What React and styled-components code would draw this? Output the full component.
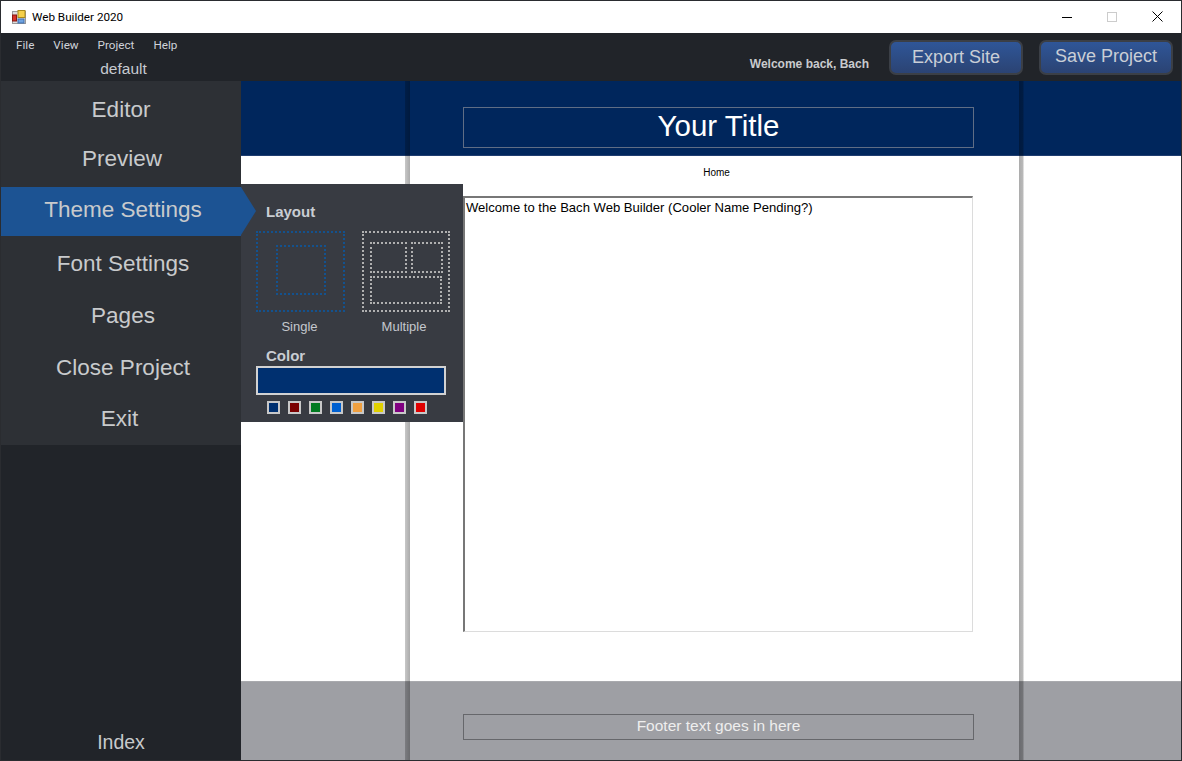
import React from "react";
import styled, { createGlobalStyle } from "styled-components";

const Global = createGlobalStyle`
  html, body { margin: 0; padding: 0; background: #fff; overflow: hidden; }
  * { box-sizing: border-box; }
  body { font-family: "Liberation Sans", Arial, sans-serif; }
`;

const Window = styled.div`
  width: 1182px; height: 761px;
  border: 1px solid #2a2c30;
  display: flex; flex-direction: column;
  overflow: hidden;
`;
const TitleBar = styled.div`
  height: 32px; flex: none; background: #fff;
  display: flex; align-items: center;
  padding-left: 11px;
`;
const TitleText = styled.span`
  margin-left: 6px; font: 11.7px Roboto, "Open Sans", sans-serif; color: #000;
`;
const WinButtons = styled.div`
  margin-left: auto; display: flex; align-items: center; padding-right: 18px; gap: 35px;
  height: 100%; padding-bottom: 1px;
`;
const Header = styled.header`
  height: 48px; flex: none; background: #212429; display: flex; position: relative;
`;
const HeaderLeft = styled.div`
  width: 240px; display: flex; flex-direction: column;
`;
const MenuBar = styled.nav`
  display: flex; gap: 19px; padding: 5px 0 0 15px; height: 26px;
`;
const MenuItem = styled.span`
  font: 11.7px/14px Roboto, "Open Sans", sans-serif; color: #cfd3d9;
`;
const ProjectName = styled.div`
  text-align: center; font-size: 15.5px; line-height: 20px; color: #c6cad0; padding-left: 5px;
`;
const HeaderRight = styled.div`
  flex: 1; display: flex; justify-content: flex-end; align-items: flex-start;
  padding: 7px 8px 0 0; gap: 16px;
`;
const Welcome = styled.span`
  font-size: 12px; font-weight: bold; color: #c9cbce; margin: 17px 4px 0 0;
`;
const ActionButton = styled.button`
  width: 134px; height: 35px; border: 2px solid #3b3f46; border-radius: 7px;
  background: linear-gradient(#2f5698, #2b4373);
  color: #c9ced6; font: 18px "Liberation Sans", Arial, sans-serif;
  padding: 0 0 ${p => p.$lift}px;
`;
const Workspace = styled.div`
  flex: 1; display: flex; position: relative; min-height: 0;
`;
const Sidebar = styled.aside`
  width: 240px; flex: none; background: #212429; display: flex; flex-direction: column;
`;
const Nav = styled.div`
  background: #2d3035; height: 364px; display: flex; flex-direction: column;
`;
const NavItem = styled.div`
  height: ${p => p.$h}px; flex: none;
  display: flex; align-items: center; justify-content: center;
  font-size: 22.5px; color: #c8cacc; padding-top: 2px;
  padding-left: ${p => p.$shift > 0 ? p.$shift : 0}px;
  padding-right: ${p => p.$shift < 0 ? -p.$shift : 0}px;
`;
const ActiveItem = styled(NavItem)`
  margin-top: 8px; position: relative; z-index: 3;
  background: #1c5393; padding-top: 0; padding-bottom: 4px;
  &::after {
    content: ""; position: absolute; left: 100%; top: 0;
    border-left: 15px solid #1c5393; border-top: 24.5px solid transparent; border-bottom: 24.5px solid transparent;
  }
`;
const IndexLabel = styled.div`
  margin-top: auto; text-align: center; font-size: 19.5px; color: #c8cacc; padding-bottom: 6px;
`;
const Flyout = styled.section`
  position: absolute; left: 240px; top: 103px; width: 222px; height: 238px;
  background: #383b42; z-index: 2; padding: 18px 0 0 15px;
`;
const GroupLabel = styled.div`
  font-size: 15px; font-weight: bold; color: #c9cdd3; padding-left: 10px; line-height: 20px;
  margin-top: ${p => p.$top || 0}px;
`;
const LayoutRow = styled.div`
  display: flex; gap: 17px; margin-top: 9px;
`;
const LayoutOption = styled.div`
  display: flex; flex-direction: column; align-items: center;
`;
const OptionLabel = styled.div`
  font-size: 13px; color: #c4c8ce; line-height: 18px; margin-top: 6px; padding-right: ${p => p.$pad}px;
`;
const Frame = styled.div`
  width: ${p => p.$w}px; height: 81px; border: 2px dotted ${p => p.$c};
`;
const SingleFrame = styled(Frame)`
  display: flex; justify-content: center; align-items: center; padding: 0 0 4px 0;
`;
const Inner = styled.div`
  border: 2px dotted ${p => p.$c}; width: ${p => p.$w}px; height: ${p => p.$h}px;
`;
const MultiFrame = styled(Frame)`
  display: flex; flex-wrap: wrap; align-content: flex-start; padding: 9px 0 0 6px; gap: 3px 4px;
`;
const ColorBar = styled.div`
  width: 190px; height: 29px; background: #003070; border: 2px solid #d2d2d2;
`;
const Swatches = styled.div`
  display: flex; gap: 8px; margin: 6px 0 0 11px;
`;
const Swatch = styled.span`
  width: 13px; height: 13px; border: 2px solid #c8c8c8; background: ${p => p.$c}; display: block;
`;
const Canvas = styled.main`
  flex: 1; display: flex; flex-direction: column; position: relative; background: #fff; min-width: 0;
  &::before, &::after {
    content: ""; position: absolute; top: 0; bottom: 0; z-index: 1; width: 5px;
  }
  &::before {
    left: 164px;
    background: linear-gradient(90deg, rgba(0,0,0,.22), rgba(0,0,0,.33));
  }
  &::after {
    left: 778px;
    background: linear-gradient(90deg, rgba(0,0,0,.33), rgba(0,0,0,.28) 70%, rgba(0,0,0,.06));
  }
`;
const Banner = styled.div`
  height: 75px; flex: none; background: #00265c; border-bottom: 1px solid #1f3d70;
  padding: 26px 0 0 222px;
`;
const TitleBox = styled.div`
  width: 511px; height: 41px; border: 1px solid #5f6d85;
  display: flex; align-items: center; justify-content: center;
  color: #fff; font-size: 29.5px; padding-bottom: 4px;
`;
const Body = styled.div`
  flex: 1; display: flex; flex-direction: column; padding-left: 222px;
`;
const PageNav = styled.div`
  width: 507px; text-align: center; font-size: 10px; color: #000; height: 40px; padding-top: 11px; line-height: 12px;
`;
const EditorBox = styled.div`
  width: 510px; height: 436px;
  border: 1px solid #dcdcdc; border-top: 2px solid #777; border-left: 2px solid #777;
  font-size: 13.07px; color: #000; padding: 2px 0 0 1px; line-height: 15px;
`;
const Footer = styled.footer`
  height: 79px; flex: none; background: #9e9fa4; border-top: 1px solid #a9aaae;
  padding: 32px 0 0 222px;
`;
const FooterBox = styled.div`
  width: 511px; height: 26px; border: 1px solid #66676b;
  display: flex; align-items: center; justify-content: center;
  color: #eeeeee; font-size: 15.5px; padding-bottom: 2px;
`;

const AppIcon = () => (
  <svg width="14" height="15" viewBox="0 0 14 15">
    <rect x="0.5" y="1.5" width="13" height="12" fill="#ddd" stroke="#999" />
    <rect x="6" y="0.5" width="7" height="7" fill="#f5d04a" stroke="#a98a1a" />
    <rect x="0.5" y="5" width="4" height="6" fill="#d8342a" stroke="#8a1a14" />
    <rect x="6" y="9" width="6" height="4" fill="#6fa3e0" stroke="#3f6fb0" />
  </svg>
);
const MinIcon = () => (
  <svg width="10" height="10" viewBox="0 0 10 10"><path d="M0 5.5H10" stroke="#000" /></svg>
);
const MaxIcon = () => (
  <svg width="10" height="10" viewBox="0 0 10 10"><rect x=".5" y=".5" width="9" height="9" fill="none" stroke="#ccc" /></svg>
);
const CloseIcon = () => (
  <svg width="11" height="11" viewBox="0 0 11 11"><path d="M.5 .5L10.5 10.5M10.5 .5L.5 10.5" stroke="#000" /></svg>
);

const swatchColors = ["#003070", "#7a0000", "#007a20", "#0060d0", "#f0a040", "#e0d000", "#800080", "#e00000"];

export default function App() {
  return (
    <Window>
      <Global />
      <TitleBar>
        <AppIcon />
        <TitleText>Web Builder 2020</TitleText>
        <WinButtons><MinIcon /><MaxIcon /><CloseIcon /></WinButtons>
      </TitleBar>
      <Header>
        <HeaderLeft>
          <MenuBar>
            <MenuItem>File</MenuItem>
            <MenuItem>View</MenuItem>
            <MenuItem>Project</MenuItem>
            <MenuItem>Help</MenuItem>
          </MenuBar>
          <ProjectName>default</ProjectName>
        </HeaderLeft>
        <HeaderRight>
          <Welcome>Welcome back, Bach</Welcome>
          <ActionButton $lift={0}>Export Site</ActionButton>
          <ActionButton $lift={2}>Save Project</ActionButton>
        </HeaderRight>
      </Header>
      <Workspace>
        <Sidebar>
          <Nav>
            <NavItem $h={56} $shift={0}>Editor</NavItem>
            <NavItem $h={42} $shift={2}>Preview</NavItem>
            <ActiveItem $h={49} $shift={4}>Theme Settings</ActiveItem>
            <NavItem $h={54} $shift={4}>Font Settings</NavItem>
            <NavItem $h={50} $shift={4}>Pages</NavItem>
            <NavItem $h={54} $shift={4}>Close Project</NavItem>
            <NavItem $h={48} $shift={-3}>Exit</NavItem>
          </Nav>
          <IndexLabel>Index</IndexLabel>
        </Sidebar>
        <Flyout>
          <GroupLabel>Layout</GroupLabel>
          <LayoutRow>
            <LayoutOption>
              <SingleFrame $w={89} $c="#13528f">
                <Inner $c="#13528f" $w={50} $h={50} />
              </SingleFrame>
              <OptionLabel $pad={2}>Single</OptionLabel>
            </LayoutOption>
            <LayoutOption>
              <MultiFrame $w={88} $c="#b0b0b0">
                <Inner $c="#b0b0b0" $w={37} $h={31} />
                <Inner $c="#b0b0b0" $w={32} $h={31} />
                <Inner $c="#b0b0b0" $w={72} $h={28} />
              </MultiFrame>
              <OptionLabel $pad={4}>Multiple</OptionLabel>
            </LayoutOption>
          </LayoutRow>
          <GroupLabel $top={10}>Color</GroupLabel>
          <ColorBar />
          <Swatches>
            {swatchColors.map(c => <Swatch key={c} $c={c} />)}
          </Swatches>
        </Flyout>
        <Canvas>
          <Banner><TitleBox>Your Title</TitleBox></Banner>
          <Body>
            <PageNav>Home</PageNav>
            <EditorBox>Welcome to the Bach Web Builder (Cooler Name Pending?)</EditorBox>
          </Body>
          <Footer><FooterBox>Footer text goes in here</FooterBox></Footer>
        </Canvas>
      </Workspace>
    </Window>
  );
}
